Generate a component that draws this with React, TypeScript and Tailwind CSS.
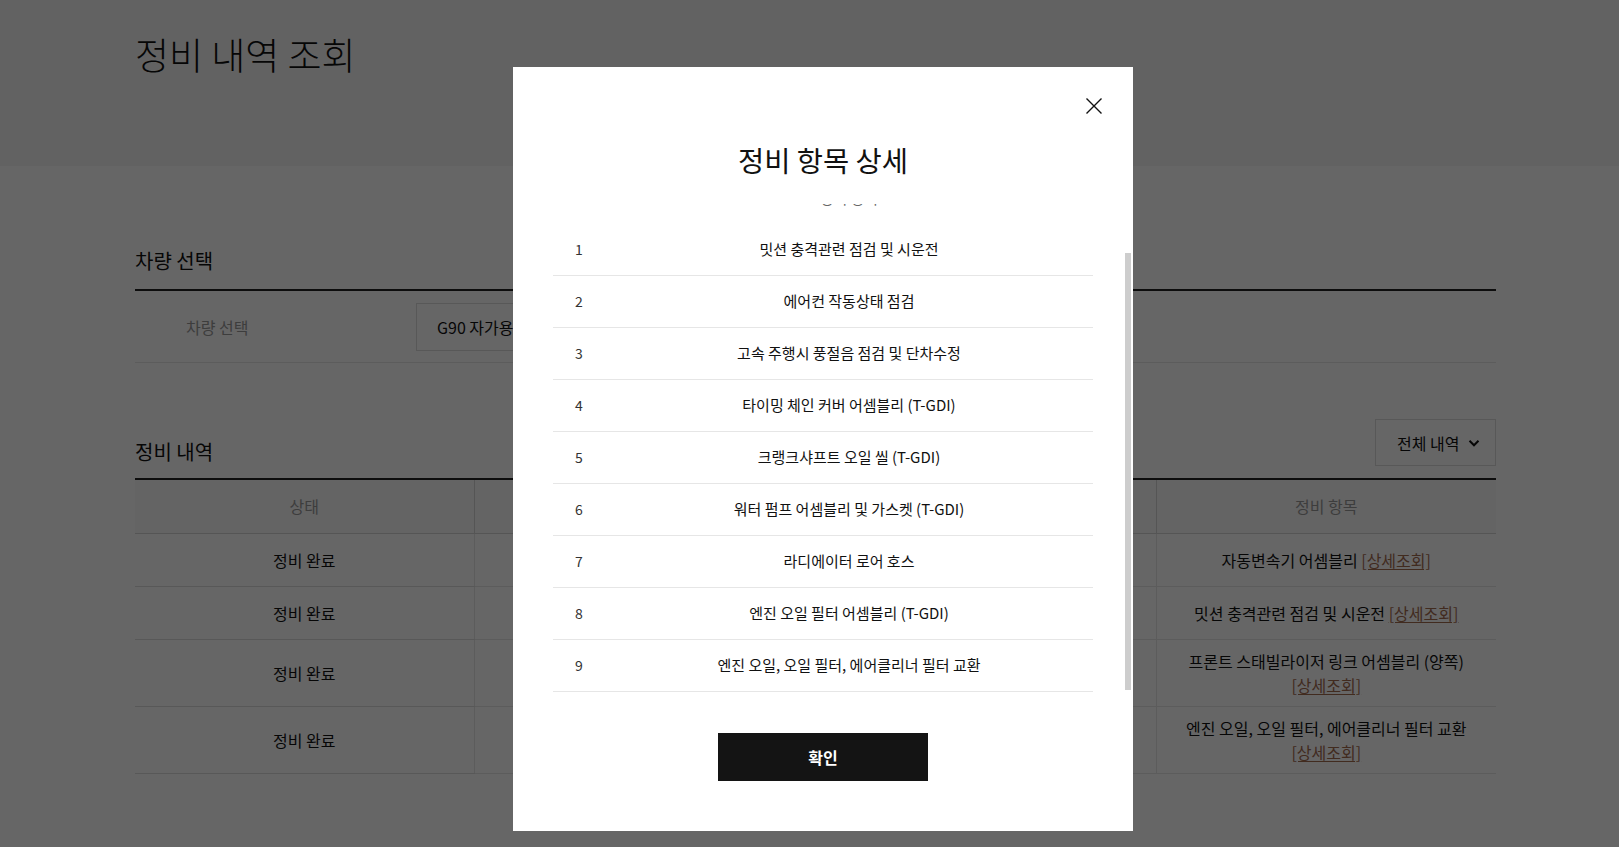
import { useLayoutEffect, useRef } from "react";

type HistoryRow = {
  status: string;
  item: string;
};

const history: HistoryRow[] = [
  { status: "정비 완료", item: "자동변속기 어셈블리" },
  { status: "정비 완료", item: "밋션 충격관련 점검 및 시운전" },
  { status: "정비 완료", item: "프론트 스태빌라이저 링크 어셈블리 (양쪽)" },
  { status: "정비 완료", item: "엔진 오일, 오일 필터, 에어클리너 필터 교환" },
];

const detailItems = [
  "밋션 충격관련 점검 및 시운전",
  "에어컨 작동상태 점검",
  "고속 주행시 풍절음 점검 및 단차수정",
  "타이밍 체인 커버 어셈블리 (T-GDI)",
  "크랭크샤프트 오일 씰 (T-GDI)",
  "워터 펌프 어셈블리 및 가스켓 (T-GDI)",
  "라디에이터 로어 호스",
  "엔진 오일 필터 어셈블리 (T-GDI)",
  "엔진 오일, 오일 필터, 에어클리너 필터 교환",
];

function DetailModal() {
  const listRef = useRef<HTMLDivElement>(null);

  // the list is shown scrolled to the end, as in the captured state
  useLayoutEffect(() => {
    if (listRef.current) {
      listRef.current.scrollTop = listRef.current.scrollHeight;
    }
  }, []);

  return (
    <div className="fixed inset-0 flex items-start justify-center bg-black/60 pt-[67px] pl-[27px]">
      <div className="relative h-[764px] w-[620px] bg-white pt-[73px]">
        <button className="absolute top-[31px] right-[31px] h-4 w-4" aria-label="닫기">
          <svg width="16" height="16" viewBox="0 0 16 16" fill="none">
            <path d="M0.5 0.5 L15.5 15.5 M15.5 0.5 L0.5 15.5" stroke="#111" strokeWidth="1.4" />
          </svg>
        </button>

        <h2 className="text-center text-[28.5px] leading-[40px] text-[#111]">정비 항목 상세</h2>

        <div ref={listRef} className="mt-[24px] h-[488px] overflow-hidden px-[40px]">
          <div className="flex h-[52px] items-center text-[15px] text-[#666]">
            <div className="w-[52px]" />
            <div className="flex-1 text-center">정비 항목</div>
          </div>
          {detailItems.map((text, i) => (
            <div
              key={i}
              className="flex h-[52px] items-center border-b border-[#e6e6e6] text-[#111]"
            >
              <div className="w-[52px] text-center text-[14px] text-[#333]">{i + 1}</div>
              <div className="flex-1 text-center text-[15px]">{text}</div>
            </div>
          ))}
        </div>

        <span className="absolute top-[186px] right-[2px] h-[437px] w-[6px] bg-[#cdcdcd]" />

        <div className="mt-[41px] flex justify-center">
          <button className="h-[48px] w-[210px] bg-[#141414] text-[16px] font-semibold text-white">
            확인
          </button>
        </div>
      </div>
    </div>
  );
}

export default function App() {
  return (
    <div className="min-h-screen bg-white font-['Noto_Sans_CJK_KR','Noto_Sans',sans-serif] text-[#111]">
      <div className="h-[166px] bg-[#f5f5f5] pt-[29px] pl-[135px]">
        <h1 className="text-[37px] font-light leading-[50px]">정비 내역 조회</h1>
      </div>

      <div className="pl-[135px] pr-[123px]">
        <section className="pt-[81px]">
          <div className="border-b-2 border-[#222] pb-[14px]">
            <h2 className="text-[20px] leading-[28px]">차량 선택</h2>
          </div>
          <div className="flex h-[72px] items-center border-b border-[#e5e5e5]">
            <div className="w-[281px] pl-[51px] text-[16px] text-[#999]">차량 선택</div>
            <div className="flex h-[48px] w-[440px] items-center border border-[#ddd] px-[20px] text-[16px]">
              G90 자가용
            </div>
          </div>
        </section>

        <section className="mt-[56px]">
          <div className="flex items-end justify-between border-b-2 border-[#222] pb-[12px]">
            <h2 className="text-[20px] leading-[28px]">정비 내역</h2>
            <button className="flex h-[47px] w-[121px] items-center border border-[#ddd] pl-[21px] text-[16px]">
              전체 내역
              <svg className="ml-[9px]" width="12" height="12" viewBox="0 0 12 12" fill="none">
                <path d="M1.5 3.8 L6 8.3 L10.5 3.8" stroke="#111" strokeWidth="2" />
              </svg>
            </button>
          </div>

          <table className="w-full table-fixed border-collapse text-[16px]">
            <colgroup>
              <col className="w-[339px]" />
              <col className="w-[220px]" />
              <col className="w-[220px]" />
              <col className="w-[242px]" />
              <col className="w-[340px]" />
            </colgroup>
            <thead>
              <tr className="bg-[#fafafa] text-[#999]">
                <th className="h-[53px] border-b border-[#d5d5d5] font-normal">상태</th>
                <th className="h-[53px] border-b border-l border-[#d5d5d5] font-normal" />
                <th className="h-[53px] border-b border-l border-[#d5d5d5] font-normal" />
                <th className="h-[53px] border-b border-l border-[#d5d5d5] font-normal" />
                <th className="h-[53px] border-b border-l border-[#d5d5d5] font-normal">정비 항목</th>
              </tr>
            </thead>
            <tbody>
              {history.map((row, i) => (
                <tr key={i}>
                  <td className="h-[53px] border-b border-[#dcdcdc] py-[9px] text-center leading-[24px]">{row.status}</td>
                  <td className="h-[53px] border-b border-l border-[#e5e5e5]" />
                  <td className="h-[53px] border-b border-l border-[#e5e5e5]" />
                  <td className="h-[53px] border-b border-l border-[#e5e5e5]" />
                  <td className="h-[53px] border-b border-l border-[#e5e5e5] px-[12px] py-[9px] text-center leading-[24px]">
                    {row.item}{" "}
                    <a href="#" className="whitespace-nowrap text-[#a36b4f] underline underline-offset-2">
                      [상세조회]
                    </a>
                  </td>
                </tr>
              ))}
            </tbody>
          </table>
        </section>
      </div>

      <DetailModal />
    </div>
  );
}
